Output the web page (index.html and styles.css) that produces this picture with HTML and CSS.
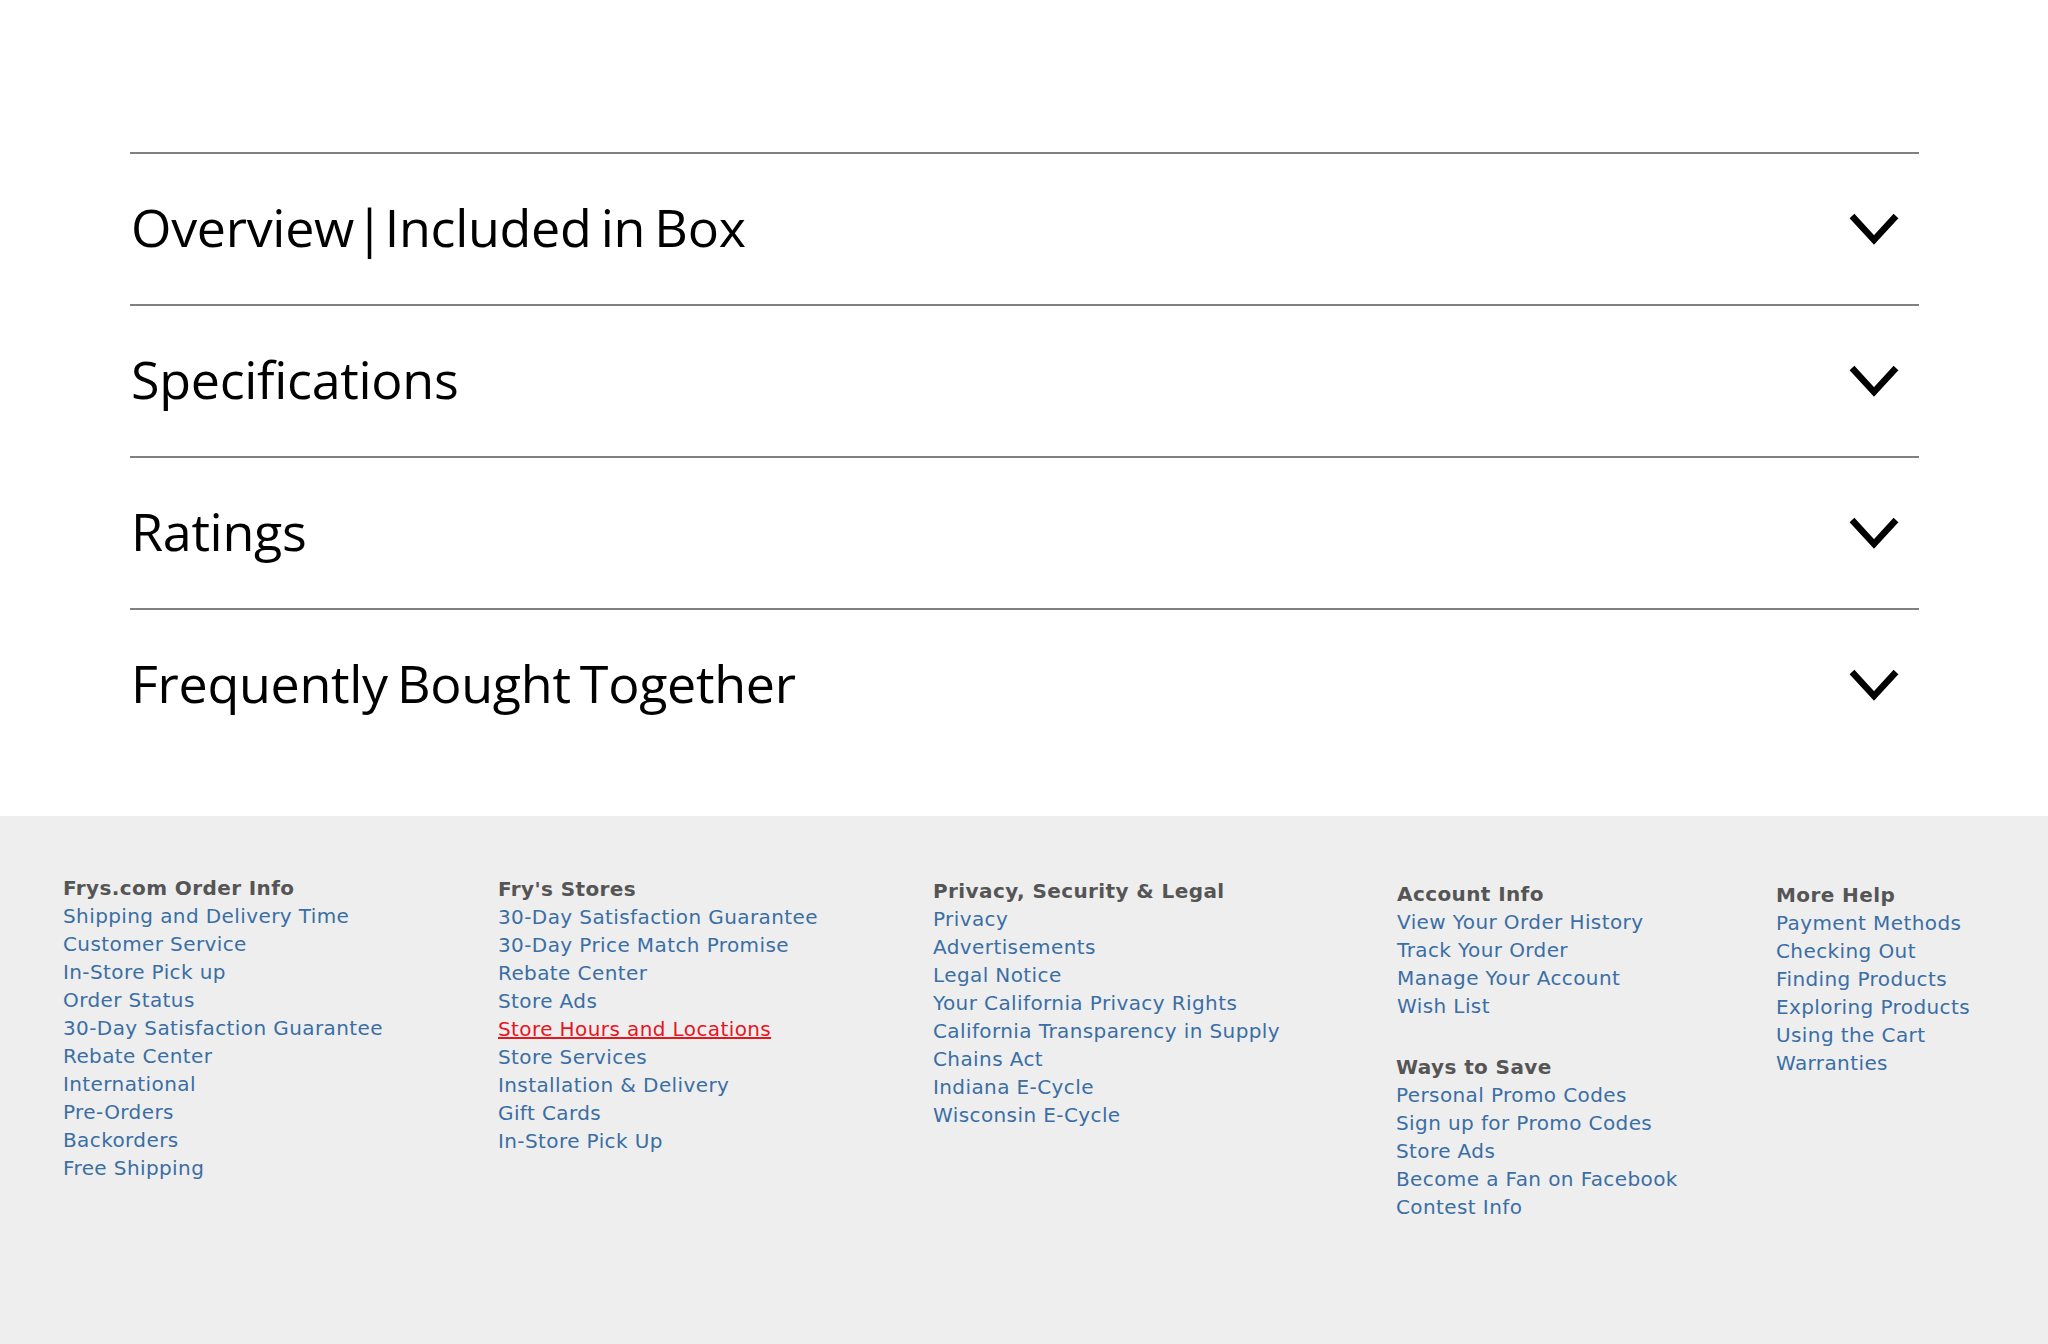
FILE: index.html
```html
<!DOCTYPE html>
<html lang="en">
<head>
<meta charset="utf-8">
<title>Product details</title>
<link rel="stylesheet" href="styles.css">
</head>
<body>
<div class="page">
  <main class="accordion">
    <div class="acc-item">
      <h2 class="acc-title">Overview<span class="sep"> | </span>Included in Box</h2>
      <svg class="chev" viewBox="0 0 52 34" width="52" height="34"><polyline points="4,4 26,28 48,4"/></svg>
    </div>
    <div class="acc-item">
      <h2 class="acc-title">Specifications</h2>
      <svg class="chev" viewBox="0 0 52 34" width="52" height="34"><polyline points="4,4 26,28 48,4"/></svg>
    </div>
    <div class="acc-item">
      <h2 class="acc-title">Ratings</h2>
      <svg class="chev" viewBox="0 0 52 34" width="52" height="34"><polyline points="4,4 26,28 48,4"/></svg>
    </div>
    <div class="acc-item">
      <h2 class="acc-title">Frequently Bought Together</h2>
      <svg class="chev" viewBox="0 0 52 34" width="52" height="34"><polyline points="4,4 26,28 48,4"/></svg>
    </div>
  </main>

  <footer class="footer">
    <div class="fcol c1">
      <div class="fhead">Frys.com Order Info</div>
      <a href="#">Shipping and Delivery Time</a>
      <a href="#">Customer Service</a>
      <a href="#">In-Store Pick up</a>
      <a href="#">Order Status</a>
      <a href="#">30-Day Satisfaction Guarantee</a>
      <a href="#">Rebate Center</a>
      <a href="#">International</a>
      <a href="#">Pre-Orders</a>
      <a href="#">Backorders</a>
      <a href="#">Free Shipping</a>
    </div>
    <div class="fcol c2">
      <div class="fhead">Fry's Stores</div>
      <a href="#">30-Day Satisfaction Guarantee</a>
      <a href="#">30-Day Price Match Promise</a>
      <a href="#">Rebate Center</a>
      <a href="#">Store Ads</a>
      <a href="#" class="active">Store Hours and Locations</a>
      <a href="#">Store Services</a>
      <a href="#">Installation &amp; Delivery</a>
      <a href="#">Gift Cards</a>
      <a href="#">In-Store Pick Up</a>
    </div>
    <div class="fcol c3">
      <div class="fhead">Privacy, Security &amp; Legal</div>
      <a href="#">Privacy</a>
      <a href="#">Advertisements</a>
      <a href="#">Legal Notice</a>
      <a href="#">Your California Privacy Rights</a>
      <a href="#">California Transparency in Supply</a>
      <a href="#">Chains Act</a>
      <a href="#">Indiana E-Cycle</a>
      <a href="#">Wisconsin E-Cycle</a>
    </div>
    <div class="fcol c4">
      <div class="fgroup">
        <div class="fhead">Account Info</div>
        <a href="#">View Your Order History</a>
        <a href="#">Track Your Order</a>
        <a href="#">Manage Your Account</a>
        <a href="#">Wish List</a>
      </div>
      <div class="fgroup second">
        <div class="fhead">Ways to Save</div>
        <a href="#">Personal Promo Codes</a>
        <a href="#">Sign up for Promo Codes</a>
        <a href="#">Store Ads</a>
        <a href="#">Become a Fan on Facebook</a>
        <a href="#">Contest Info</a>
      </div>
    </div>
    <div class="fcol c5">
      <div class="fhead">More Help</div>
      <a href="#">Payment Methods</a>
      <a href="#">Checking Out</a>
      <a href="#">Finding Products</a>
      <a href="#">Exploring Products</a>
      <a href="#">Using the Cart</a>
      <a href="#">Warranties</a>
    </div>
  </footer>
</div>
</body>
</html>
```

FILE: styles.css
```css
* { box-sizing: border-box; }

html, body {
  margin: 0;
  padding: 0;
  background: #ffffff;
}

.page {
  min-height: 1344px;
  display: flex;
  flex-direction: column;
}

.accordion {
  padding: 152px 129px 56px 130px;
}

.acc-item {
  height: 152px;
  border-top: 2px solid #808080;
  display: flex;
  align-items: center;
  justify-content: space-between;
  padding: 0 19px 0 1px;
}

.acc-title {
  margin: -3px 0 0 0;
  font-family: "Open Sans", "Noto Sans", sans-serif;
  font-weight: 400;
  font-size: 52px;
  letter-spacing: -0.3px;
  word-spacing: -4px;
  color: #000;
  line-height: 1.36;
}

.sep {
  word-spacing: -12px;
}

.chev {
  display: block;
  flex: none;
}

.chev polyline {
  fill: none;
  stroke: #000;
  stroke-width: 6.5;
  stroke-linejoin: miter;
  stroke-linecap: butt;
}

.footer {
  flex: 1;
  background: #eeeeee;
  display: flex;
  padding: 58px 0 0 63px;
  font-family: "DejaVu Sans", Verdana, sans-serif;
  font-size: 20px;
  letter-spacing: 0.4px;
  line-height: 28px;
}

.fcol,
.fgroup {
  display: flex;
  flex-direction: column;
  align-items: flex-start;
}

.c1 { width: 435px; }
.c2 { width: 435px; margin-top: 1px; }
.c3 { width: 464px; margin-top: 3px; }
.c4 { width: 379px; margin-top: 6px; }
.c5 { margin-top: 7px; }

.fgroup.second {
  margin-top: 33px;
  margin-left: -1px;
}

.fhead {
  font-weight: bold;
  color: #555555;
}

.fcol a {
  color: #3a6ea5;
  text-decoration: none;
}

.fcol a.active {
  color: #e8141e;
  text-decoration: underline;
}
```
